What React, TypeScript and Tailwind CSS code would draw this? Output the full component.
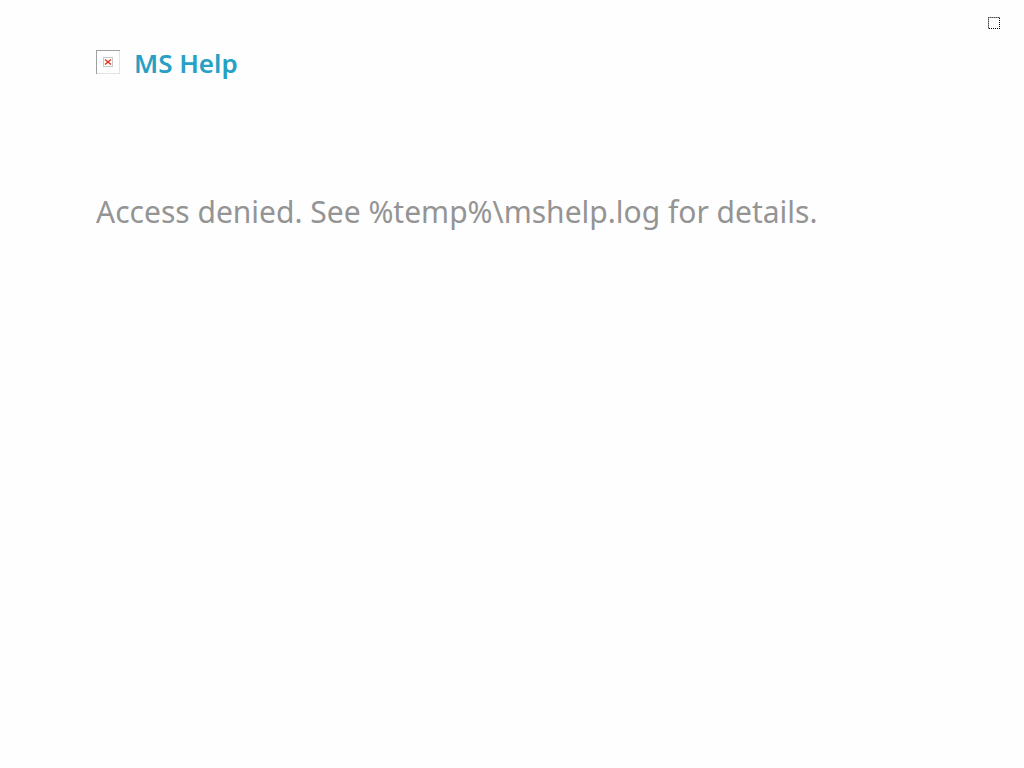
export default function App() {
  return (
    <div className="min-h-screen bg-[#fefefe] px-24 pt-[45px] font-['Noto_Sans','Open_Sans',sans-serif]">
      <button type="button" aria-label="Close" className="absolute right-6 top-[17px] h-3 w-3">
        <svg aria-hidden="true" className="h-3 w-3" viewBox="0 0 12 12" shapeRendering="crispEdges" fill="none">
          <path d="M0.5 12V0.5H12" stroke="#909090" />
          <path d="M0 0.5H12M0.5 0V12" stroke="#505050" strokeDasharray="1 1" />
          <path d="M11.5 0V12M0 11.5H12" stroke="#000" strokeDasharray="1 1" strokeDashoffset="1" />
        </svg>
      </button>
      <header className="flex items-start gap-[14px]">
        <svg role="img" aria-label="Logo" className="mt-[5px] h-6 w-6" viewBox="0 0 24 24" shapeRendering="crispEdges">
          <path d="M0.5 24V0.5H24" fill="none" stroke="#a0a0a0" />
          <path d="M23.5 1V23.5H1" fill="none" stroke="#e3e3e3" />
          <rect x="7.5" y="7.5" width="9" height="9" fill="#fff" stroke="#c8c8c8" />
          <path d="M9 9.5L15 14.5M15 9.5L9 14.5" stroke="#e0301a" strokeWidth="1.4" shapeRendering="auto" />
        </svg>
        <h1 className="text-[26px] leading-9 font-semibold text-[#26a0c4]">MS Help</h1>
      </header>
      <main className="pt-[107px]">
        <p className="text-[30px] leading-[48px] text-[#949494]">Access denied. See %temp%\mshelp.log for details.</p>
      </main>
    </div>
  );
}
